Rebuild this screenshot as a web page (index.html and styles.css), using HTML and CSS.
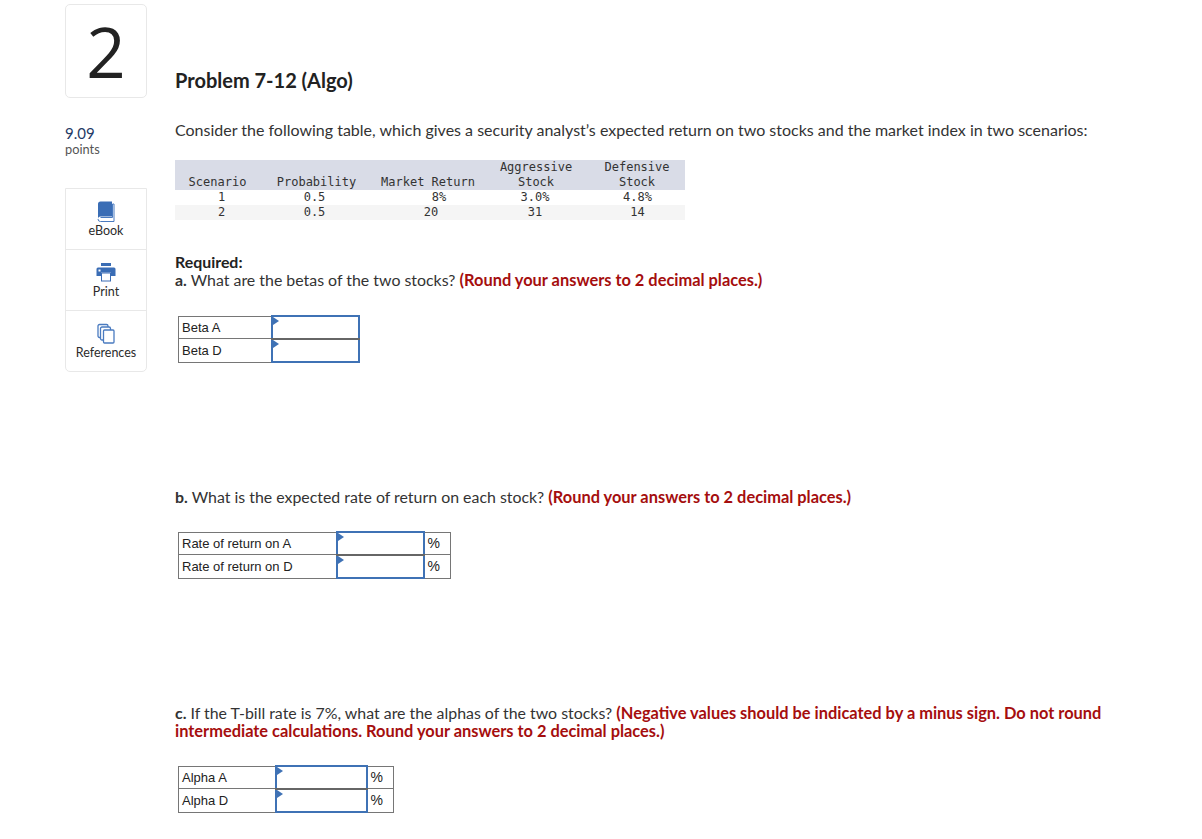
FILE: index.html
```html
<!DOCTYPE html>
<html lang="en">
<head>
<meta charset="utf-8">
<title>Problem 7-12 (Algo)</title>
<link rel="stylesheet" href="styles.css">
</head>
<body>
<div class="page">
  <aside class="side">
    <div class="qnum">2</div>
    <div class="pts"><div class="pts-val">9.09</div><div class="pts-lab">points</div></div>
    <div class="tools">
      <div class="tool">
        <svg class="ico" width="18" height="21" viewBox="0 0 18 21"><path d="M1 3a2.500 2.500 0 0 1 2.500-2.500H15V15.500H3.500A2.500 2.500 0 0 0 1 18Z" fill="#3a6db5"/><path d="M1 18a2.500 2.500 0 0 0 2.500 2.500H17V3h-1.500v13.500H3.500" fill="none" stroke="#4a7bc0" stroke-width="1"/></svg>
        <span>eBook</span>
      </div>
      <div class="tool">
        <svg class="ico" width="20" height="19" viewBox="0 0 20 19"><rect x="5" y="0" width="10" height="3" fill="#3a6db5"/><path d="M2 4.500h16a1.500 1.500 0 0 1 1.500 1.500v7H15V9.500H5V13H.5V6A1.500 1.500 0 0 1 2 4.500Z" fill="#3a6db5"/><rect x="5.500" y="10" width="9" height="8" fill="#fff" stroke="#3a6db5"/><rect x="2.500" y="6.500" width="2" height="2" fill="#fff"/></svg>
        <span>Print</span>
      </div>
      <div class="tool">
        <svg class="ico" width="18" height="20" viewBox="0 0 18 20" fill="#fff" stroke="#4a7bc0" stroke-width="1.300"><rect x="1" y="1" width="10" height="13" rx="1.500"/><rect x="3.500" y="3.500" width="10" height="13" rx="1.500"/><rect x="6.500" y="6.500" width="10.500" height="13" rx="1"/></svg>
        <span>References</span>
      </div>
    </div>
  </aside>
  <main class="main">
    <h1 class="title">Problem 7-12 (Algo)</h1>
    <p class="intro">Consider the following table, which gives a security analyst’s expected return on two stocks and the market index in two scenarios:</p>
    <table class="data">
      <thead>
        <tr><th class="c1">Scenario</th><th class="c2">Probability</th><th class="c3">Market Return</th><th class="c4">Aggressive<br>Stock</th><th class="c5">Defensive<br>Stock</th></tr>
      </thead>
      <tbody>
        <tr><td>1</td><td>0.5</td><td class="pad8">8%</td><td>3.0%</td><td>4.8%</td></tr>
        <tr class="alt"><td>2</td><td>0.5</td><td>20</td><td>31</td><td>14</td></tr>
      </tbody>
    </table>
    <p class="q q-req"><b class="req">Required:</b><br><b>a.</b> What are the betas of the two stocks? <b class="red">(Round your answers to 2 decimal places.)</b></p>
    <table class="ans ans-a">
      <tr><td class="lab la">Beta A</td><td class="inp ia"><i class="tri"></i></td></tr>
      <tr><td class="lab la">Beta D</td><td class="inp ia"><i class="tri"></i></td></tr>
    </table>
    <p class="q q-b"><b>b.</b> What is the expected rate of return on each stock? <b class="red">(Round your answers to 2 decimal places.)</b></p>
    <table class="ans ans-b">
      <tr><td class="lab lb">Rate of return on A</td><td class="inp ia"><i class="tri"></i></td><td class="unit">%</td></tr>
      <tr><td class="lab lb">Rate of return on D</td><td class="inp ia"><i class="tri"></i></td><td class="unit">%</td></tr>
    </table>
    <p class="q q-c"><b>c.</b> If the T-bill rate is 7%, what are the alphas of the two stocks? <b class="red">(Negative values should be indicated by a minus sign. Do not round intermediate calculations. Round your answers to 2 decimal places.)</b></p>
    <table class="ans ans-c">
      <tr><td class="lab lc">Alpha A</td><td class="inp ic"><i class="tri"></i></td><td class="unit">%</td></tr>
      <tr><td class="lab lc">Alpha D</td><td class="inp ic"><i class="tri"></i></td><td class="unit">%</td></tr>
    </table>
  </main>
</div>
</body>
</html>
```
FILE: styles.css
```css
* { box-sizing: border-box; }
html, body { margin: 0; padding: 0; background: #fff; }
body { font-family: "Lato", "Liberation Sans", sans-serif; color: #2b2b2b; }
.page { display: flex; padding: 4px 0 0 65px; }
.side { width: 82px; flex: none; }
.qnum { height: 94px; border: 1px solid #e8e8e8; border-radius: 5px; display: flex; align-items: center; justify-content: center; font-size: 69px; line-height: 1; color: #222; font-family: "Open Sans", sans-serif; font-weight: 400; }
.pts { margin-top: 26px; }
.pts-val { font-size: 15px; line-height: 18px; color: #1f3b66; }
.pts-lab { font-size: 12.800px; line-height: 15px; color: #555; }
.tools { margin-top: 31px; border: 1px solid #e8e8e8; border-radius: 0 0 5px 5px; }
.tool { height: 61px; display: flex; flex-direction: column; align-items: center; padding-top: 12px; font-size: 12.500px; line-height: 14px; color: #2b2b2b; border-bottom: 1px solid #e8e8e8; }
.tool:last-child { border-bottom: 0; height: 60px; }
.ico { display: block; height: 21px; margin-bottom: 2px; }
.main { margin-left: 28px; flex: 1; min-width: 0; }
.title { margin: 63px 0 0; font-size: 20px; line-height: 26px; font-weight: 700; color: #222; }
.intro { margin: 27px 0 0; font-size: 16px; line-height: 20px; color: #333; }
.data { margin-top: 20px; width: 510px; border-collapse: collapse; table-layout: fixed; font-family: "DejaVu Sans Mono", monospace; font-size: 12px; line-height: 15px; color: #333; }
.data th { background: #d9dce7; font-weight: 400; vertical-align: bottom; text-align: center; padding: 0; height: 30px; }
.data td { text-align: center; padding: 0; height: 15px; }
.data td:nth-child(1) { padding-left: 8px; }
.data td:nth-child(2) { padding-right: 4px; }
.data td:nth-child(3) { padding-left: 6px; }
.data td:nth-child(4) { padding-right: 2px; }
.data td:nth-child(5) { padding-left: 1px; }
.data .alt td { background: #f5f5f5; }
.c1 { width: 85px; } .c2 { width: 113px; } .c3 { width: 110px; } .c4 { width: 106px; } .c5 { width: 96px; }
.data td.pad8 { padding-left: 22px; }
.q { margin: 0; font-size: 15.900px; line-height: 18px; color: #333; }
.q b { font-weight: 700; }
.req { color: #222; }
.q .red { color: #a50e0e; font-size: 16.400px; }
.q-req { margin-top: 33px; }
.q-b { margin-top: 125px; }
.q-c { margin-top: 125px; width: 960px; }
.ans { border-collapse: collapse; margin-left: 3px; font-family: "Liberation Sans", sans-serif; font-size: 13px; color: #222; table-layout: fixed; }
.ans td { border: 1px solid #767676; padding: 0 3px; height: 22.500px; }
.ans tr + tr td { height: 23.500px; }
.ans-a { margin-top: 26px; }
.ans-b { margin-top: 25px; }
.ans-c { margin-top: 25px; }
.la { width: 93px; } .lb { width: 158px; } .lc { width: 97px; }
.ans td.inp { width: 87px; border: 2px solid #3f72b5; position: relative; padding: 0; }
.ans td.ic { width: 91px; }
.ans tr:first-child td.inp { border-bottom-color: #666; }
.ans td.unit { width: 27px; font-size: 14px; }
.tri { position: absolute; left: 0; top: 0; border-left: 6px solid #3f72b5; border-top: 4px solid transparent; border-bottom: 4px solid transparent; }
```
